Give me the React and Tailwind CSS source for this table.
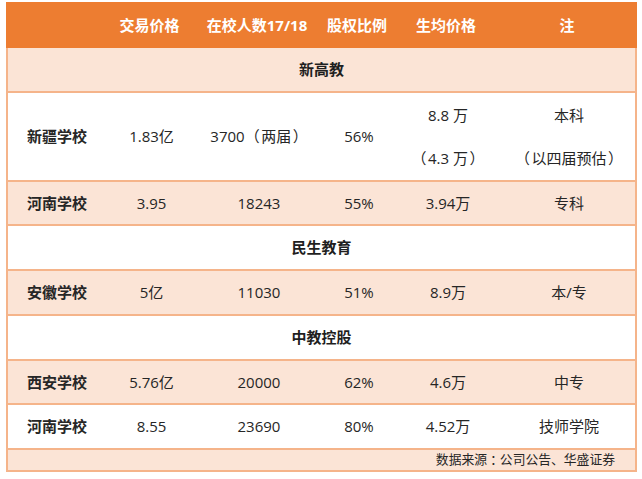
const cols = "grid grid-cols-[98px_91px_124px_76px_102px_140px]";
const font = "font-['Open_Sans','Noto_Sans_CJK_SC',sans-serif]";

function Row({ bg, h, cells }) {
  return (
    <div className={`${cols} ${bg} ${h} border-b-2 border-[#f5b48a] items-center text-[15px] text-[#262626]`}>
      {cells.map((c, i) => (
        <div key={i} className={`text-center ${i === 0 ? "font-bold" : ""}`}>{c}</div>
      ))}
    </div>
  );
}

function Section({ bg, title }) {
  return (
    <div className={`${bg} h-[45px] border-b-2 border-[#f5b48a] flex items-center justify-center text-[15px] font-bold text-[#1f1f1f]`}>
      {title}
    </div>
  );
}

export default function App() {
  const light = "bg-[#fbe4d6]";
  const white = "bg-white";
  return (
    <div className={`w-[642px] h-[479px] bg-white pt-[2px] pl-[6px] ${font}`}>
      <div className="w-[631px]">
        <div className={`${cols} h-[46px] bg-[#ed7d31] items-center text-[15px] font-bold text-white`}>
          <div></div>
          <div className="text-center">交易价格</div>
          <div className="text-center">在校人数17/18</div>
          <div className="text-center">股权比例</div>
          <div className="text-center">生均价格</div>
          <div className="text-center">注</div>
        </div>
        <div className="border-x-2 border-[#f5b48a]">
          <Section bg={light} title="新高教" />
          <div className={`${cols} ${white} h-[89px] border-b-2 border-[#f5b48a] items-center text-[15px] text-[#262626]`}>
            <div className="text-center font-bold">新疆学校</div>
            <div className="text-center">1.83亿</div>
            <div className="text-center whitespace-pre">{"3700（\u200A两届\u200A）"}</div>
            <div className="text-center">56%</div>
            <div className="flex flex-col items-center gap-[21px]">
              <div>8.8 万</div>
              <div className="whitespace-pre">{"（\u200A4.3 万\u200A）"}</div>
            </div>
            <div className="flex flex-col items-center gap-[21px]">
              <div>本科</div>
              <div className="whitespace-pre">{"（\u200A以四届预估\u200A）"}</div>
            </div>
          </div>
          <Row bg={light} h="h-[44px]" cells={["河南学校", "3.95", "18243", "55%", "3.94万", "专科"]} />
          <Section bg={white} title="民生教育" />
          <Row bg={light} h="h-[45px]" cells={["安徽学校", "5亿", "11030", "51%", "8.9万", "本/专"]} />
          <Section bg={white} title="中教控股" />
          <Row bg={light} h="h-[44px]" cells={["西安学校", "5.76亿", "20000", "62%", "4.6万", "中专"]} />
          <Row bg={white} h="h-[45px]" cells={["河南学校", "8.55", "23690", "80%", "4.52万", "技师学院"]} />
          <div className={`${light} h-[22px] border-b-2 border-[#f5b48a] flex items-center justify-end pr-[20px] text-[12.8px] text-[#262626]`}>
            数据来源<span className="font-['Noto_Sans_CJK_TC',sans-serif]">：</span>公司公告、华盛证券
          </div>
        </div>
      </div>
    </div>
  );
}
